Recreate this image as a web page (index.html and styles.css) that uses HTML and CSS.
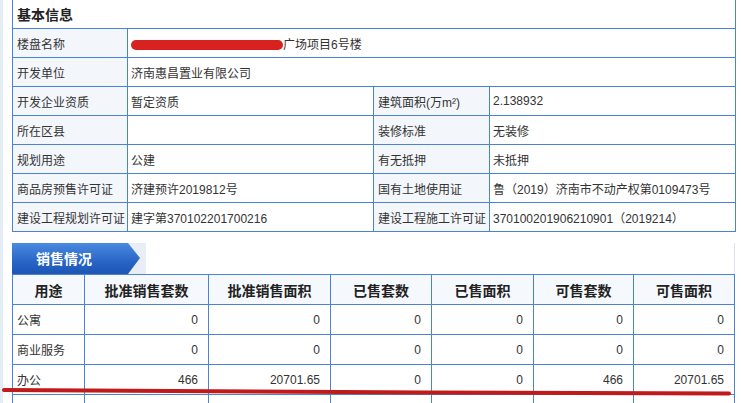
FILE: index.html
```html
<!DOCTYPE html>
<html lang="zh-CN">
<head>
<meta charset="utf-8">
<title>项目信息</title>
<link rel="stylesheet" href="styles.css">
</head>
<body>
<div class="page">
  <table class="info">
    <colgroup><col class="c1"><col class="c2"><col class="c3"><col class="c4"></colgroup>
    <tr class="title-row"><td colspan="4" class="title">基本信息</td></tr>
    <tr><td class="lab">楼盘名称</td><td colspan="3" class="val"><span class="redact"></span>广场项目6号楼</td></tr>
    <tr><td class="lab">开发单位</td><td colspan="3" class="val">济南惠昌置业有限公司</td></tr>
    <tr><td class="lab">开发企业资质</td><td class="val">暂定资质</td><td class="lab">建筑面积(万m²)</td><td class="val">2.138932</td></tr>
    <tr><td class="lab">所在区县</td><td class="val"></td><td class="lab">装修标准</td><td class="val">无装修</td></tr>
    <tr><td class="lab">规划用途</td><td class="val">公建</td><td class="lab">有无抵押</td><td class="val">未抵押</td></tr>
    <tr><td class="lab">商品房预售许可证</td><td class="val">济建预许2019812号</td><td class="lab">国有土地使用证</td><td class="val">鲁（2019）济南市不动产权第0109473号</td></tr>
    <tr><td class="lab">建设工程规划许可证</td><td class="val">建字第370102201700216</td><td class="lab">建设工程施工许可证</td><td class="val">370100201906210901（2019214）</td></tr>
  </table>

  <div class="sales">
    <div class="tabbar">
      <div class="tab"><span class="tab-text">销售情况</span></div>
    </div>
    <table class="stable">
      <colgroup><col class="s1"><col class="s2"><col class="s3"><col class="s4"><col class="s5"><col class="s6"><col class="s7"></colgroup>
      <tr class="head"><th>用途</th><th>批准销售套数</th><th>批准销售面积</th><th>已售套数</th><th>已售面积</th><th>可售套数</th><th>可售面积</th></tr>
      <tr><td class="name">公寓</td><td>0</td><td>0</td><td>0</td><td>0</td><td>0</td><td>0</td></tr>
      <tr><td class="name">商业服务</td><td>0</td><td>0</td><td>0</td><td>0</td><td>0</td><td>0</td></tr>
      <tr><td class="name">办公</td><td>466</td><td>20701.65</td><td>0</td><td>0</td><td>466</td><td>20701.65</td></tr>
      <tr><td class="name"></td><td></td><td></td><td></td><td></td><td></td><td></td></tr>
    </table>
    <svg class="mark" width="741" height="10" viewBox="0 0 741 10"><path d="M4 3 C 200 4.5, 500 6, 729 6.5" stroke="#c01a1a" stroke-width="4" fill="none" stroke-linecap="round"/></svg>
  </div>
</div>
</body>
</html>
```

FILE: styles.css
```css
html, body {
  margin: 0;
  padding: 0;
}
body {
  background: #e4ecf6;
  font-family: "Noto Sans CJK SC", "Liberation Sans", sans-serif;
  font-size: 12px;
  color: #333;
  overflow: hidden;
}
.page {
  margin-left: 3px;
  background: #fff;
  padding: 0 0 20px 9px;
  min-height: 420px;
}
table {
  border-collapse: collapse;
  table-layout: fixed;
}
.info {
  width: 723px;
  margin-top: -1px;
}
.info td {
  border: 1px solid #4a84cf;
  height: 29px;
  padding: 0 0 0 3px;
  box-sizing: border-box;
  white-space: nowrap;
  font-family: "Liberation Sans", "Noto Sans CJK SC", sans-serif;
}
.c1 { width: 115px; }
.c2 { width: 246px; }
.c3 { width: 116px; }
.c4 { width: 246px; }
.info .title {
  font-size: 14px;
  font-weight: bold;
  color: #222;
  padding-left: 4px;
  height: 29px;
}
.info .lab {
  background: #f3f7fc;
  padding-left: 4px;
}
.redact {
  display: inline-block;
  width: 152px;
  height: 10px;
  border-radius: 5px;
  background: #d82220;
  vertical-align: -1px;
}
.sales {
  position: relative;
  margin-top: 11px;
}
.tabbar {
  display: flex;
  height: 31px;
  width: 723px;
  border-right: 1px solid #dde3ea;
  box-sizing: border-box;
}
.tab {
  width: 134px;
  background: #e9eef6;
  position: relative;
}
.tab::before {
  content: "";
  position: absolute;
  left: 0;
  top: 0;
  width: 128px;
  height: 31px;
  background: linear-gradient(180deg, #4a8ae0 0%, #2865c6 60%, #1d56b4 100%);
  clip-path: polygon(0 0, 116px 0, 128px 15px, 116px 31px, 0 31px);
}
.tab-text {
  position: relative;
  display: block;
  padding-left: 24px;
  line-height: 31px;
  font-size: 14px;
  font-weight: bold;
  color: #fff;
  font-family: "Noto Sans CJK SC", sans-serif;
}
.stable {
  width: 722px;
}
.s1 { width: 72px; }
.s2 { width: 124px; }
.s3 { width: 122px; }
.s4 { width: 101px; }
.s5 { width: 102px; }
.s6 { width: 100px; }
.s7 { width: 101px; }
.stable th, .stable td {
  border: 1px solid #4a84cf;
  height: 30px;
  box-sizing: border-box;
  padding: 0 10px 0 4px;
  white-space: nowrap;
  font-family: "Liberation Sans", "Noto Sans CJK SC", sans-serif;
}
.stable th {
  background: #f5f8fc;
  font-size: 14px;
  font-weight: bold;
  color: #222;
  text-align: center;
  padding: 0;
  font-family: "Noto Sans CJK SC", sans-serif;
}
.stable td {
  text-align: right;
}
.stable td.name {
  text-align: left;
}
.mark {
  position: absolute;
  left: -12px;
  top: 144px;
}
```
